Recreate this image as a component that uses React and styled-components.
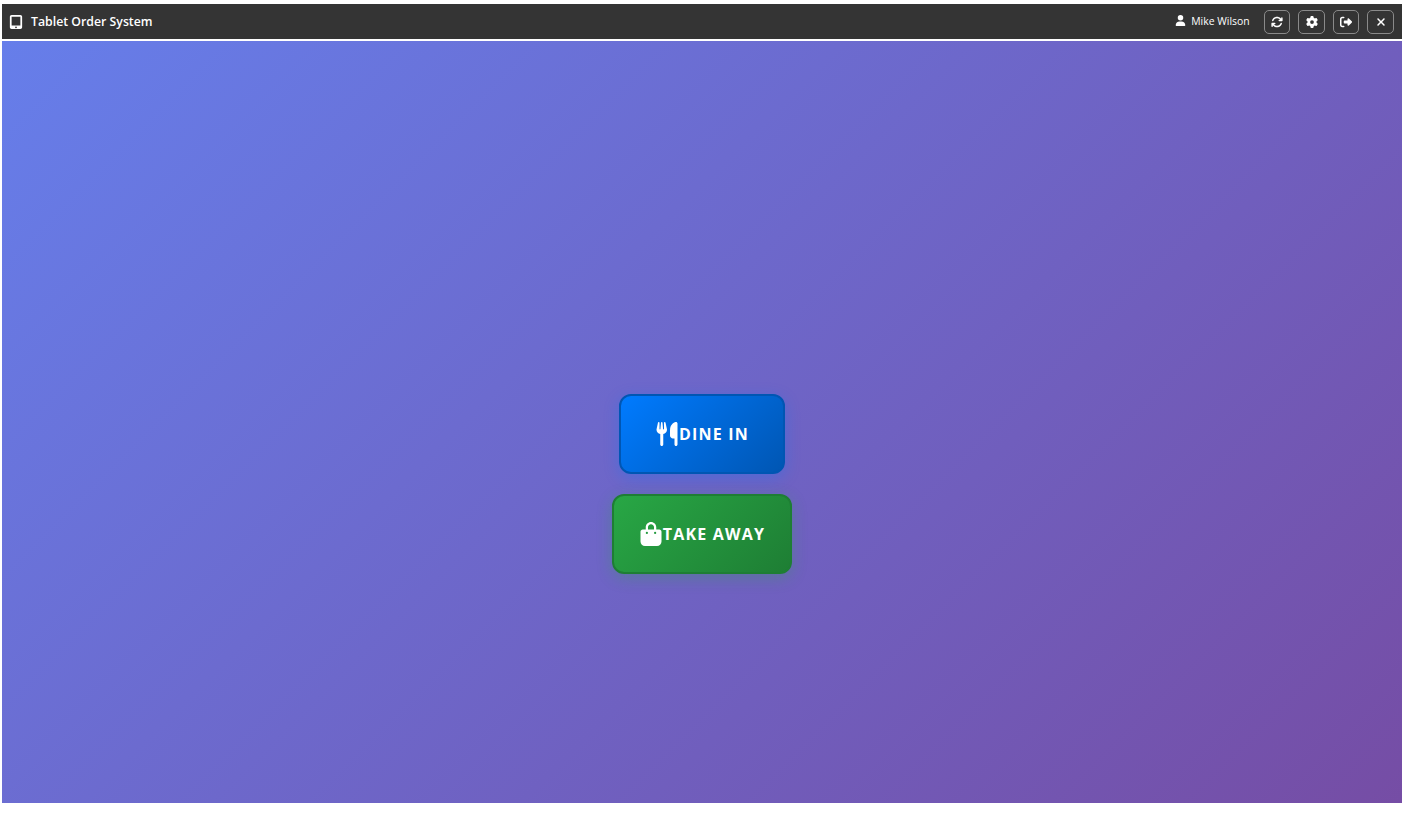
import React from "react";
import styled, { createGlobalStyle } from "styled-components";
import {
  FaTabletScreenButton,
  FaUser,
  FaArrowsRotate,
  FaGear,
  FaRightFromBracket,
  FaXmark,
  FaUtensils,
  FaBagShopping,
} from "react-icons/fa6";

const GlobalStyle = createGlobalStyle`
  html, body {
    margin: 0;
    padding: 0;
    background: #fff;
  }
  body {
    font-family: "Open Sans", "Noto Sans", sans-serif;
  }
`;

const Page = styled.div`
  width: 1400px;
  height: 799px;
  padding: 4px 6px 13px 2px;
  display: flex;
  flex-direction: column;
`;

const Header = styled.header`
  height: 35px;
  background: #343434;
  display: flex;
  align-items: center;
  justify-content: space-between;
  padding: 0 8px 0 7px;
  border-bottom: 2px solid #fff;
  color: #fff;
`;

const Title = styled.div`
  display: flex;
  align-items: center;
  gap: 8px;
  font-size: 12.3px;
  font-weight: 600;
`;

const HeaderRight = styled.div`
  display: flex;
  align-items: center;
  gap: 8px;
`;

const UserName = styled.div`
  display: flex;
  align-items: center;
  gap: 5px;
  font-size: 10.4px;
  margin: 0 6px 2px 0;
`;

const IconButton = styled.button`
  width: 26.6px;
  height: 24px;
  padding: 0;
  display: flex;
  align-items: center;
  justify-content: center;
  background: transparent;
  color: #fff;
  font-size: 12px;
  border: 1px solid #8a8a8a;
  border-radius: 5px;
`;

const Main = styled.main`
  flex: 1;
  background: linear-gradient(135deg, #667eea 0%, #764ba2 104%);
  display: flex;
  flex-direction: column;
  align-items: center;
  justify-content: center;
  gap: 20px;
  padding-top: 123px;
  box-sizing: border-box;
`;

const OrderButton = styled.button`
  height: 80px;
  width: ${(props) => props.width};
  display: flex;
  align-items: center;
  justify-content: center;
  background: linear-gradient(135deg, ${(props) => props.from}, ${(props) => props.to});
  border: 2px solid ${(props) => props.to};
  border-radius: 12px;
  color: #fff;
  font-family: "Open Sans", "Noto Sans", sans-serif;
  font-size: 16px;
  font-weight: 700;
  letter-spacing: 1.2px;
  box-shadow: 0 4px 15px ${(props) => props.glow};
  svg {
    font-size: 24px;
  }
`;

export default function App() {
  return (
    <Page>
      <GlobalStyle />
      <Header>
        <Title>
          <FaTabletScreenButton size={14} />
          Tablet Order System
        </Title>
        <HeaderRight>
          <UserName>
            <FaUser size={11} />
            Mike Wilson
          </UserName>
          <IconButton><FaArrowsRotate /></IconButton>
          <IconButton><FaGear /></IconButton>
          <IconButton><FaRightFromBracket /></IconButton>
          <IconButton><FaXmark /></IconButton>
        </HeaderRight>
      </Header>
      <Main>
        <OrderButton width="166px" from="#007bff" to="#0056b3" glow="rgba(0, 123, 255, 0.3)">
          <FaUtensils />
          DINE IN
        </OrderButton>
        <OrderButton width="180px" from="#28a745" to="#1e7e34" glow="rgba(40, 167, 69, 0.3)">
          <FaBagShopping />
          TAKE AWAY
        </OrderButton>
      </Main>
    </Page>
  );
}
